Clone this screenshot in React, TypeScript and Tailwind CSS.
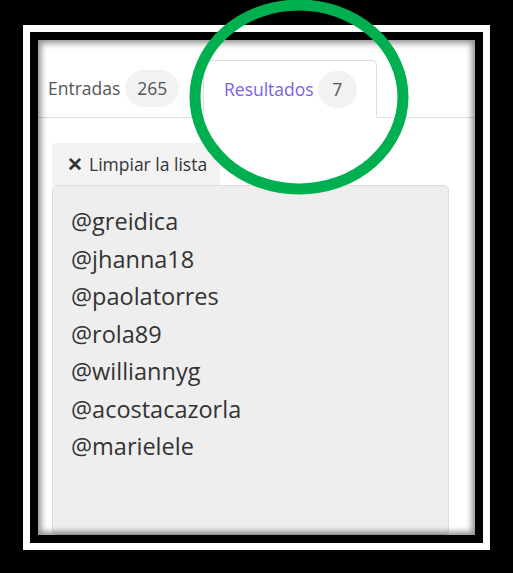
const users = [
  '@greidica',
  '@jhanna18',
  '@paolatorres',
  '@rola89',
  '@williannyg',
  '@acostacazorla',
  '@marielele',
];

export default function App() {
  return (
    <div
      className="relative w-[513px] h-[573px] bg-black pt-[25px] pl-[23px] overflow-hidden"
      style={{ fontFamily: '"Open Sans", "Noto Sans", sans-serif' }}
    >
      <div className="w-[467px] h-[525px] bg-white p-[7px]">
        <div className="w-full h-full bg-black p-[8px]">
          <div className="relative w-full h-full bg-white overflow-hidden flex flex-col">
            {/* tabs */}
            <div className="flex items-end pt-[20px] border-b border-[#dddddd] shrink-0">
              <div className="flex items-center h-[57px] pl-[10px] w-[165px] text-[17.5px] text-[#555555]">
                <span>Entradas</span>
                <span className="ml-[5px] h-[37px] px-[12px] rounded-full bg-[#f2f2f2] flex items-center">265</span>
              </div>
              <div className="flex items-center h-[58px] -mb-px pl-[20px] pr-[19px] border border-[#dddddd] border-b-white bg-white rounded-t-[5px] text-[17.5px]">
                <span className="text-[#7b61e0]">Resultados</span>
                <span className="ml-[4px] h-[37px] w-[39px] rounded-full bg-[#f2f2f2] flex items-center justify-center text-[#555555]">7</span>
              </div>
            </div>

            {/* content */}
            <div className="flex-1 px-[14px] pt-[25px] flex flex-col">
              <button className="self-start flex items-center gap-[6px] h-[42px] w-[168px] pl-[15px] bg-[#f3f3f3] rounded-t-[4px] text-[17.5px] text-[#333333]">
                <span className="font-black text-[19px] leading-none">✕</span>
                <span>Limpiar la lista</span>
              </button>
              <div className="flex-1 w-[397px] bg-[#eeeeee] border border-[#dddddd] rounded-[5px] pl-[18px] pt-[17px] text-[23.5px] leading-[37.5px] text-[#333333]">
                {users.map((u) => (
                  <div key={u}>{u}</div>
                ))}
              </div>
            </div>

            {/* inner shading of the frame */}
            <div className="pointer-events-none absolute inset-0 shadow-[inset_0_0_6px_3px_rgba(0,0,0,0.45)]" />
          </div>
        </div>
      </div>

      {/* green highlight ring */}
      <svg className="absolute left-0 top-0 pointer-events-none" width="513" height="573">
        <ellipse cx="299" cy="97" rx="104" ry="92" fill="none" stroke="#00b050" strokeWidth="11" />
      </svg>
    </div>
  );
}
